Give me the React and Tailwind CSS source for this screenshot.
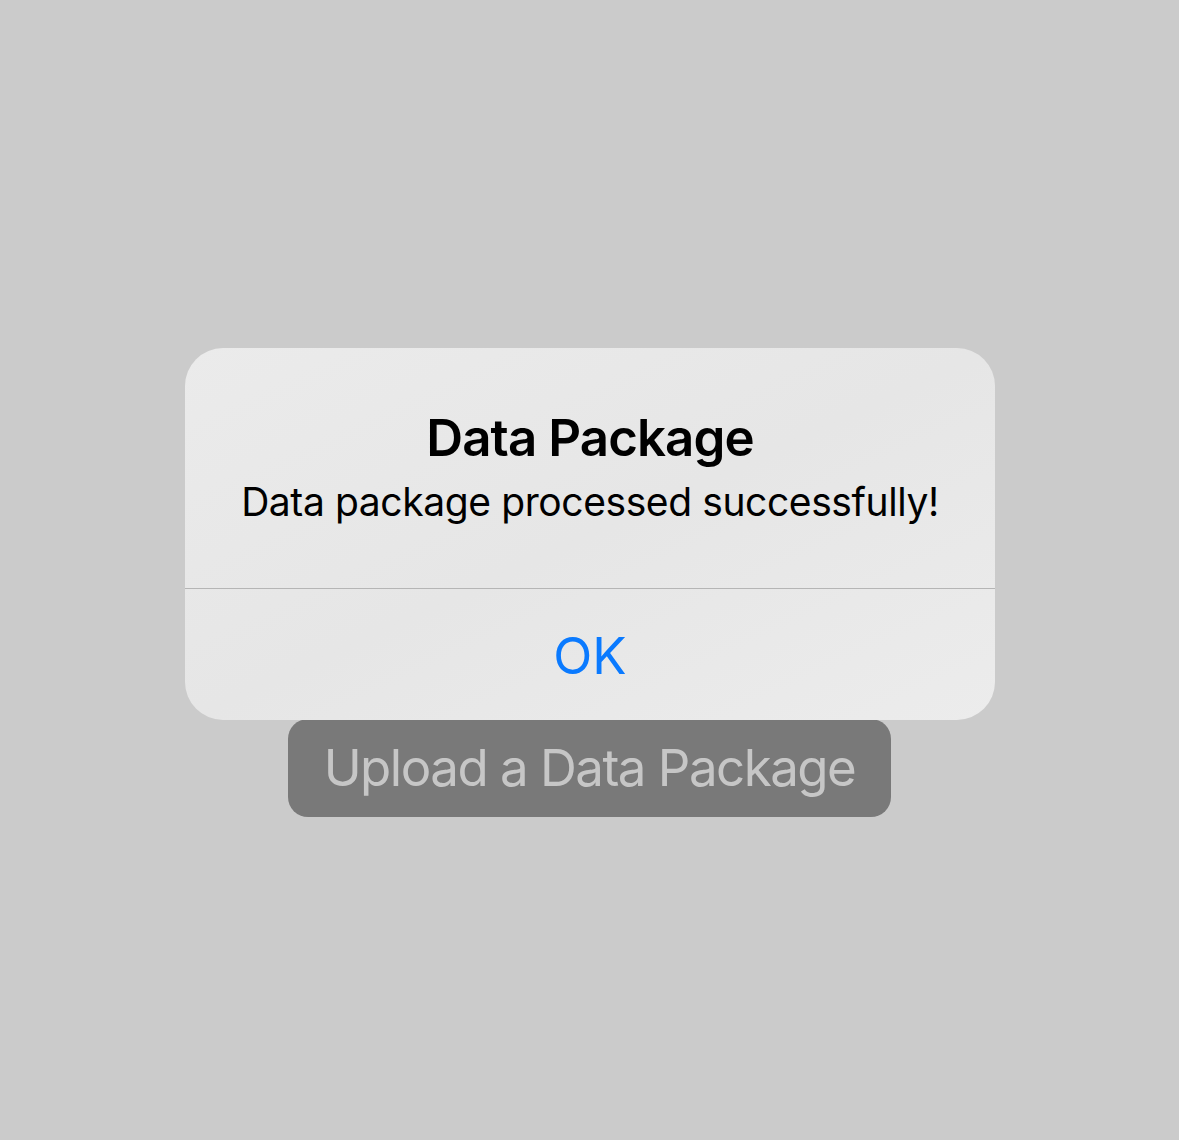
import React from "react";

const Alert = ({ title, message, onOk }) => {
  return (
    <div className="absolute left-[185px] top-[348px] w-[810px] h-[372px] rounded-[38px] bg-gradient-to-br from-[#ebebeb] via-[#e6e6e6] to-[#ececec] flex flex-col overflow-hidden">
      <div className="h-[240px] flex flex-col items-center pt-[60px]">
        <h1 className="text-[51px] leading-[60px] font-semibold text-black tracking-[-0.9px]">
          {title}
        </h1>
        <p className="text-[39px] leading-[50px] text-black tracking-[-0.4px] mt-[9px]">
          {message}
        </p>
      </div>
      <div className="h-px bg-[#b5b5b5]" />
      <button
        onClick={onOk}
        className="flex-1 flex items-center justify-center text-[51px] text-[#0a7aff] pt-[4px]"
      >
        OK
      </button>
    </div>
  );
};

const App = () => {
  return (
    <div
      className="relative w-full min-h-screen bg-[#cbcbcb] flex flex-col items-center pt-[719px]"
      style={{ fontFamily: "Inter, 'Noto Sans', sans-serif" }}
    >
      <button className="w-[603px] h-[98px] rounded-[20px] bg-[#797979] text-[#c6c6c6] text-[51px] tracking-[-1.5px] flex items-center justify-center">
        Upload a Data Package
      </button>
      <Alert title="Data Package" message="Data package processed successfully!" />
    </div>
  );
};

export default App;
